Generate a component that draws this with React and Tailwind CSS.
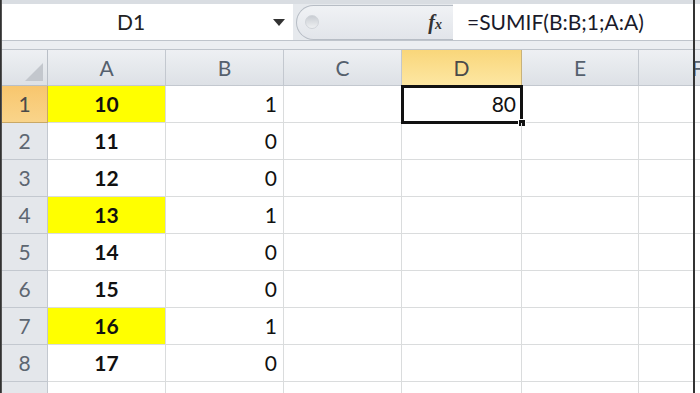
import React from "react";

const cols = ["A", "B", "C", "D", "E", "F"];
const rows = [
  { n: 1, a: "10", b: "1", hl: true },
  { n: 2, a: "11", b: "0" },
  { n: 3, a: "12", b: "0" },
  { n: 4, a: "13", b: "1", hl: true },
  { n: 5, a: "14", b: "0" },
  { n: 6, a: "15", b: "0" },
  { n: 7, a: "16", b: "1", hl: true },
  { n: 8, a: "17", b: "0" },
  { n: 9, a: "18", b: "0" },
];

const gridCols = "grid shrink-0 grid-cols-[46px_118px_118px_118px_120px_117px_118px]";

function HeaderRow() {
  return (
    <div className={gridCols + " h-[36px]"}>
      {/* corner */}
      <div className="relative bg-gradient-to-b from-[#eef0f3] to-[#dde1e6] border-r border-b border-[#b9bfc7]">
        <div className="absolute right-[4px] bottom-[4px] w-0 h-0 border-l-[18px] border-l-transparent border-b-[18px] border-b-[#c3c7cd]" />
      </div>
      {cols.map((c) =>
        c === "D" ? (
          <div
            key={c}
            className="flex items-center justify-center bg-gradient-to-b from-[#f9d67a] to-[#fde7a2] border-r border-b border-[#c8b27a] text-[21px] text-[#4a4a4a]"
          >
            {c}
          </div>
        ) : (
          <div
            key={c}
            className="flex items-center justify-center bg-gradient-to-b from-[#eef0f3] to-[#dde1e6] border-r border-b border-[#c3c8cf] text-[21px] text-[#55606d]"
          >
            {c}
          </div>
        )
      )}
    </div>
  );
}

function Row({ r }) {
  return (
    <div className={gridCols + " h-[37px]"}>
      {r.n === 1 ? (
        <div className="flex items-center justify-center bg-gradient-to-b from-[#f8c66d] to-[#f9d48a] border-r border-b border-[#c9a865] text-[21px] text-[#4a4a4a]">
          {r.n}
        </div>
      ) : (
        <div className="flex items-center justify-center bg-[#e4e7eb] border-r border-b border-[#c3c8cf] text-[21px] text-[#5d6671]">
          {r.n}
        </div>
      )}
      <div
        className={
          "flex items-center justify-center border-r border-b border-[#dadcdd] text-[21px] font-bold text-[#111] " +
          (r.hl ? "bg-[#ffff00]" : "bg-white")
        }
      >
        {r.a}
      </div>
      <div className="flex items-center justify-end pr-[6px] border-r border-b border-[#dadcdd] text-[21px] text-[#111]">
        {r.b}
      </div>
      <div className="border-r border-b border-[#dadcdd]" />
      <div className="relative flex items-center justify-end pr-[5px] border-r border-b border-[#dadcdd] text-[21px] text-[#111]">
        {r.n === 1 && (
          <>
            80
            <div className="absolute -left-[1px] -top-[1px] -right-[2px] -bottom-[2px] border-[3px] border-[#111]" />
            <div className="absolute -right-[5px] -bottom-[5px] w-[8px] h-[8px] bg-[#111] border border-white" />
          </>
        )}
      </div>
      <div className="border-r border-b border-[#dadcdd]" />
      <div className="border-r border-b border-[#dadcdd]" />
    </div>
  );
}

export default function App() {
  return (
    <div
      className="relative w-[700px] h-[393px] overflow-hidden bg-white flex"
      style={{ fontFamily: "Lato, 'Open Sans', sans-serif" }}
    >
      <div className="w-[2px] shrink-0 bg-gradient-to-r from-[#222] to-[#666]" />
      <div className="w-[760px] shrink-0 flex flex-col">
        {/* top strip */}
        <div className="h-[4px] shrink-0 bg-[#d9dde2]" />
        {/* formula bar */}
        <div className="h-[36px] shrink-0 flex">
          <div className="w-[291px] bg-white flex items-center relative">
            <span className="ml-[115px] text-[21px] text-[#222]">D1</span>
            <div className="absolute left-[271px] top-[15px] w-0 h-0 border-l-[6px] border-l-transparent border-r-[6px] border-r-transparent border-t-[7px] border-t-[#333]" />
          </div>
          <div className="w-[160px] bg-[#e6e9ed] flex items-center">
            <div className="ml-[3px] h-[35px] flex-1 flex items-center rounded-l-full border border-r-0 border-[#b7bdc5] bg-gradient-to-b from-[#f0f2f5] to-[#e2e5ea]">
              <div className="ml-[8px] w-[14px] h-[14px] rounded-full bg-gradient-to-b from-[#c9cdd3] to-[#eef0f2] border border-[#d0d4d9]" />
              <div className="flex-1" />
              <span
                className="mr-[11px] text-[20px] italic font-bold text-[#333]"
                style={{ fontFamily: "'Liberation Serif', serif" }}
              >
                f<span className="text-[14px]">x</span>
              </span>
            </div>
          </div>
          <div className="flex-1 bg-white flex items-center pl-[14px] text-[21px] text-[#1a1a2a]">
            =SUMIF(B:B;1;A:A)
          </div>
        </div>
        {/* separator */}
        <div className="h-[10px] shrink-0 bg-[#eceef1] border-t border-b border-[#bfc4cb]" />
        <HeaderRow />
        {rows.map((r) => (
          <Row key={r.n} r={r} />
        ))}
      </div>
      {/* window edge drawn over the sheet */}
      <div className="absolute left-[693px] top-0 w-[2px] h-full bg-[#333]" />
    </div>
  );
}
